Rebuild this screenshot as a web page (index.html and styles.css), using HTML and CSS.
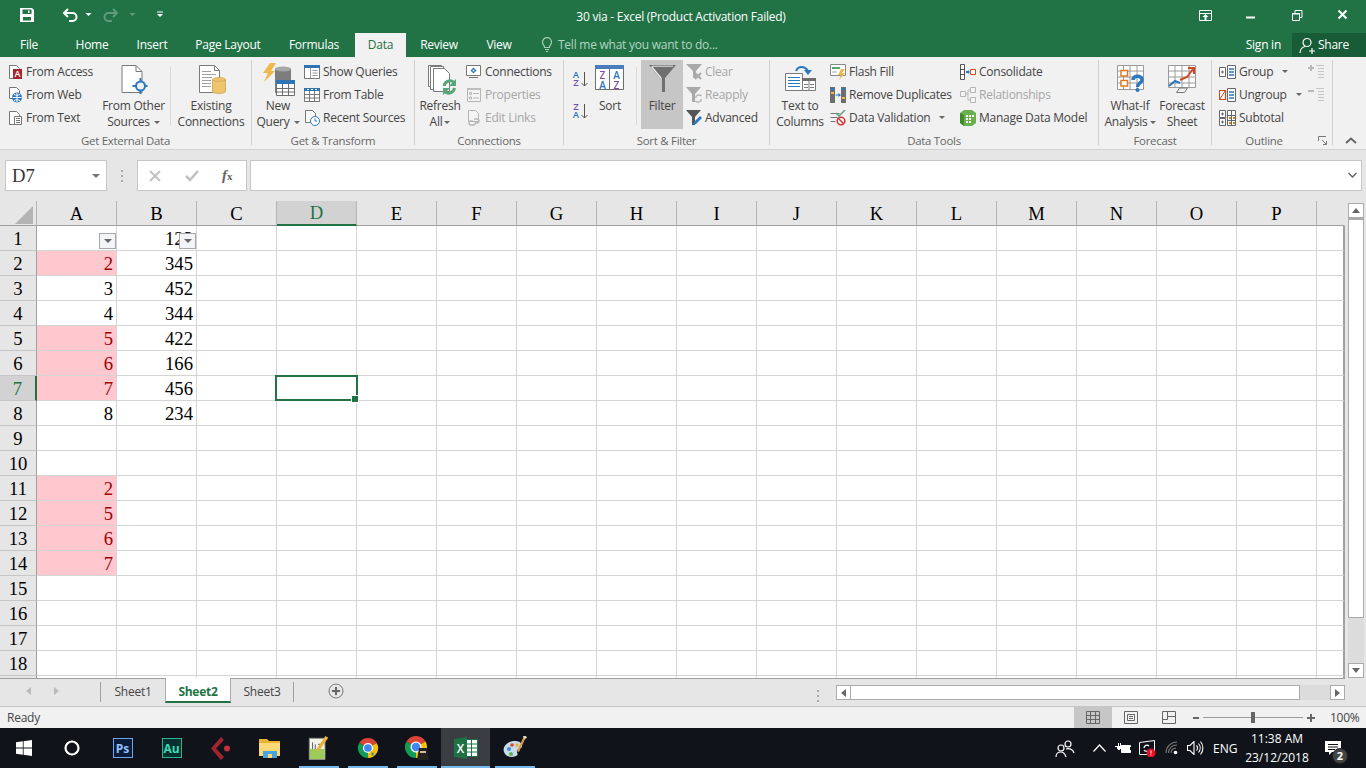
FILE: index.html
```html
<!DOCTYPE html>
<html lang="en">
<head>
<meta charset="utf-8">
<title>30 via - Excel (Product Activation Failed)</title>
<link rel="stylesheet" href="styles.css">
</head>
<body>
<header class="titlebar">
  <svg class="qat" width="175" height="33" viewBox="0 0 175 33">
    <path fill="#fff" d="M20 8h12l2 2v12H20z"/>
    <path fill="#217346" d="M22.500 9.500h9v4.500h-9zM23 17h8v3.500h-8z"/><path fill="#fff" d="M28 10.500h1.500v2.500H28z"/>
    <path fill="none" stroke="#fff" stroke-width="2" d="M68 9l-4 4 4 4M64 13h8.500a3.700 3.700 0 0 1 0 8H69"/>
    <path fill="#fff" d="M85.500 13h6l-3 3z"/>
    <path fill="none" stroke="#5f9c7b" stroke-width="2" d="M113 9l4 4-4 4M117 13h-8.500a3.700 3.700 0 0 0 0 8H112"/>
    <path fill="#5f9c7b" d="M129.500 13h6l-3 3z"/>
    <path fill="#fff" d="M157 11.500h6v1h-6zM157 14h6l-3 3z"/>
  </svg>
  <div class="doc-title">30 via - Excel (Product Activation Failed)</div>
  <svg class="winctl" width="191" height="33" viewBox="0 0 191 33">
    <path fill="none" stroke="#fff" d="M24.500 10.500h12v10h-12zM24.500 13.500h12"/><path fill="#fff" d="M30.500 14l3 3h-2v3h-2v-3h-2z"/>
    <path fill="#fff" d="M71 16.500h9v2h-9z"/>
    <path fill="none" stroke="#fff" d="M117.500 13.500h7v7h-7zM120 13v-2.500h7v7h-2.500"/><path fill="#fff" d="M117 13h8v1.500h-8z"/>
    <path fill="none" stroke="#fff" stroke-width="2" d="M163.500 10.500l8 8M171.500 10.500l-8 8"/>
  </svg>
</header>

<nav class="tabstrip">
  <span class="tab tab-file">File</span>
  <span class="tab tab-home">Home</span>
  <span class="tab tab-insert">Insert</span>
  <span class="tab tab-layout">Page Layout</span>
  <span class="tab tab-formulas">Formulas</span>
  <span class="tab tab-data">Data</span>
  <span class="tab tab-review">Review</span>
  <span class="tab tab-view">View</span>
  <span class="tellme">
    <svg width="14" height="16" viewBox="0 0 14 16"><path fill="none" stroke="#a9cdb8" stroke-width="1.200" d="M4.600 10.500c0-2-2.100-2.800-2.100-5.300a4.500 4.500 0 0 1 9 0c0 2.500-2.100 3.300-2.100 5.300zM5 12.500h4M5.800 14.500h2.400"/></svg>
    Tell me what you want to do...
  </span>
  <span class="signin">Sign in</span>
  <span class="share">
    <svg width="17" height="17" viewBox="0 0 17 17"><circle cx="8" cy="5.500" r="4" fill="none" stroke="#fff" stroke-width="1.200"/><path fill="none" stroke="#fff" stroke-width="1.200" d="M1 16c0-3.500 2.500-6 5-6.500M10 14h6M13 11v6"/></svg>
    Share
  </span>
</nav>

<section class="ribbon">
  <div class="group g1">
    <div class="group-body">
      <div class="stack s-ext">
        <div class="item tight">
          <svg width="16" height="16" viewBox="0 0 16 16"><path fill="#fff" stroke="#777" d="M1.500 1.500h7l3 3v10h-10z"/><rect x="5" y="5" width="9" height="10" fill="#a4262c"/><text x="9.500" y="13" class="svgt" fill="#fff" font-size="9" text-anchor="middle">A</text></svg>
          From Access
        </div>
        <div class="item tight">
          <svg width="16" height="16" viewBox="0 0 16 16"><path fill="#fff" stroke="#777" d="M1.500.5h7l3 3v8h-10z"/><circle cx="9" cy="10.500" r="5" fill="#2b78c2"/><path fill="none" stroke="#fff" d="M4.500 10.500h9M9 6v9M6 7.500c2 1 4 1 6 0M6 13.500c2-1 4-1 6 0"/></svg>
          From Web
        </div>
        <div class="item tight">
          <svg width="16" height="16" viewBox="0 0 16 16"><path fill="#fff" stroke="#777" d="M1.500 1.500h7l3 3v10h-10z"/><path fill="#fff" stroke="#777" d="M6.500 6.500h7v8h-7z"/><path stroke="#777" d="M8 8.500h4M8 10.500h4M8 12.500h4"/></svg>
          From Text
        </div>
      </div>
      <div class="large w-other">
        <div class="large-icon">
          <svg width="28" height="30" viewBox="-1.500 0 28 30"><path fill="#fff" stroke="#7a7a7a" d="M.5.500h14l6 6v21H.5z"/><path fill="none" stroke="#7a7a7a" d="M14.500.5v6h6"/><circle cx="19" cy="21" r="4.500" fill="#f1f1f1" stroke="#2b78c2" stroke-width="2"/><path stroke="#2b78c2" stroke-width="2" d="M11 21h4M23 21h3M19 13v4M19 25v4"/></svg>
        </div>
        <span>From Other</span>
        <span>Sources<i class="caret"></i></span>
      </div>
      <div class="inner-sep"></div>
      <div class="large w-existing">
        <div class="large-icon">
          <svg width="30" height="30" viewBox="-3 0 30 30"><path fill="#fff" stroke="#7a7a7a" d="M.5.500h15l5 5v22H.5z"/><path fill="none" stroke="#7a7a7a" d="M15.500.5v5h5"/><path stroke="#a0a0a0" d="M3 6.500h9M3 9.500h14M3 12.500h10M3 15.500h9M3 18.500h9M3 21.500h9"/><path fill="#f0c36d" stroke="#d3ad5c" d="M13.500 14.500c0-2.500 13-2.500 13 0v12c0 2.500-13 2.500-13 0z"/><path fill="none" stroke="#d3ad5c" d="M13.500 14.500c0 2.500 13 2.500 13 0"/></svg>
        </div>
        <span>Existing</span>
        <span>Connections</span>
      </div>
    </div>
    <div class="group-label">Get External Data</div>
  </div>

  <div class="group g2">
    <div class="group-body">
      <div class="large w-query">
        <div class="large-icon up2">
          <svg width="33" height="33" viewBox="0 0 33 33"><path fill="#f0b84a" d="M8 0h6l-5 8h4L2 19l4-9H1z"/><path fill="#7d7d7d" d="M13 6c0-2 16-2 16 0v24H13z"/><ellipse cx="21" cy="6" rx="8" ry="2.500" fill="#a8a8a8"/><path fill="#fff" stroke="#6d6d6d" d="M14.500 17.500h18v15h-18z"/><path fill="#2f75b5" d="M14 17h19v4H14z"/><path stroke="#6d6d6d" d="M14.500 25.500h18M14.500 29h18M20.500 21v12M26.500 21v12"/></svg>
        </div>
        <span>New</span>
        <span>Query<i class="caret"></i></span>
      </div>
      <div class="stack s-query">
        <div class="item">
          <svg width="16" height="16" viewBox="0 0 16 16"><path fill="#fff" stroke="#777" d="M.5 1.500h15v13H.5z"/><path fill="#2f75b5" d="M0 1h16v3H0z"/><path stroke="#999" d="M8.500 6.500h5M8.500 9h5M8.500 11.500h5M6.500 4v10"/></svg>
          Show Queries
        </div>
        <div class="item">
          <svg width="16" height="16" viewBox="0 0 16 16"><path fill="#fff" stroke="#777" d="M.5 1.500h15v13H.5z"/><path fill="#2f75b5" d="M0 1h16v3H0z"/><path stroke="#fff" d="M3 2.500h2M7 2.500h2M11 2.500h2"/><path stroke="#777" d="M.5 7.500h15M.5 11h15M5.500 4v11M10.500 4v11"/></svg>
          From Table
        </div>
        <div class="item">
          <svg width="16" height="16" viewBox="0 0 16 16"><path fill="#fff" stroke="#777" d="M1.500.5h7l3 3v9h-10z"/><circle cx="11" cy="11" r="4.500" fill="#fff" stroke="#2b78c2"/><path fill="none" stroke="#2b78c2" d="M11 8.500V11h2"/></svg>
          Recent Sources
        </div>
      </div>
    </div>
    <div class="group-label">Get &amp; Transform</div>
  </div>

  <div class="group g3">
    <div class="group-body">
      <div class="large w-refresh">
        <div class="large-icon">
          <svg width="33" height="31" viewBox="-3 0 33 31"><path fill="#fff" stroke="#7a7a7a" d="M1.500.5h13v21h-13z"/><path fill="#fff" stroke="#7a7a7a" d="M3.500 1.500h13v23h-13z"/><path fill="#fff" stroke="#7a7a7a" d="M6.500 3.500h11l5 5v18h-16z"/><path fill="none" stroke="#59a679" stroke-width="3" d="M17 21a6 6 0 0 1 10-3.500M27.500 23a6 6 0 0 1-10 3.500"/><path fill="#59a679" d="M29 14v7h-7zM16 30v-7h7z"/></svg>
        </div>
        <span>Refresh</span>
        <span>All<i class="caret small"></i></span>
      </div>
      <div class="stack s-conn">
        <div class="item">
          <svg width="16" height="16" viewBox="0 0 16 16"><path fill="#fff" stroke="#777" d="M.5 1.500h14v10H.5z"/><path fill="#2b78c2" d="M7.500 3.500l3 3-3 3-3-3z"/><circle cx="7.500" cy="6.500" r="1" fill="#fff"/><path stroke="#777" d="M3 13.500h9"/></svg>
          Connections
        </div>
        <div class="item off">
          <svg width="16" height="16" viewBox="0 0 16 16"><path fill="#f4f4f4" stroke="#b5b5b5" d="M1.500 1.500h13v13h-13z"/><path fill="#bdbdbd" d="M1 1h14v2H1z"/><path fill="none" stroke="#b5b5b5" d="M3.500 5.500h2v2h-2zM3.500 10h2v2h-2zM7 6.500h6M7 11h6"/></svg>
          Properties
        </div>
        <div class="item off">
          <svg width="16" height="16" viewBox="0 0 16 16"><path fill="#f4f4f4" stroke="#b5b5b5" d="M2.500.5h7l3 3v8h-10z"/><path fill="none" stroke="#b5b5b5" stroke-width="1.300" d="M7 11H5a2 2 0 0 0 0 4h3a2 2 0 0 0 1-3M9 13h2a2 2 0 0 0 0-4H8"/></svg>
          Edit Links
        </div>
      </div>
    </div>
    <div class="group-label">Connections</div>
  </div>

  <div class="group g4">
    <div class="group-body">
      <div class="sortcol">
        <svg width="17" height="24" viewBox="0 -3 17 24"><text x="5" y="8" class="svgt" fill="#2b78c2" font-size="9.500" text-anchor="middle">A</text><text x="5" y="16" class="svgt" fill="#7c4ea8" font-size="9.500" text-anchor="middle">Z</text><path fill="none" stroke="#555" d="M13.500 2v14M10.500 13l3 3 3-3"/></svg>
        <svg width="17" height="24" viewBox="0 -3 17 24"><text x="5" y="8" class="svgt" fill="#7c4ea8" font-size="9.500" text-anchor="middle">Z</text><text x="5" y="16" class="svgt" fill="#2b78c2" font-size="9.500" text-anchor="middle">A</text><path fill="none" stroke="#555" d="M13.500 2v14M10.500 13l3 3 3-3"/></svg>
      </div>
      <div class="large w-sort">
        <div class="large-icon">
          <svg width="30" height="26" viewBox="0 0 30 26"><path fill="#fff" stroke="#6d6d6d" d="M.5.500h28v24H.5zM14.500 4v21"/><path fill="#4a7ebb" d="M0 0h29v4H0z"/><text x="7.500" y="14" class="svgt" fill="#7c4ea8" font-size="10" text-anchor="middle">Z</text><text x="7.500" y="23.500" class="svgt" fill="#2b78c2" font-size="10" text-anchor="middle">A</text><text x="21.500" y="14" class="svgt" fill="#2b78c2" font-size="10" text-anchor="middle">A</text><text x="21.500" y="23.500" class="svgt" fill="#7c4ea8" font-size="10" text-anchor="middle">Z</text></svg>
        </div>
        <span>Sort</span>
      </div>
      <div class="inner-sep sep-filter"></div>
      <div class="large w-filter">
        <div class="large-icon">
          <svg width="27" height="27" viewBox="0 0 27 27"><path fill="#6f6f6f" d="M0 0h27L16 13v14h-5V13z"/><path fill="none" stroke="#e8e8e8" stroke-width="1.400" d="M2.500 1.500L12 13v14"/><path stroke="#e8e8e8" d="M3 1.200h21"/></svg>
        </div>
        <span>Filter</span>
      </div>
      <div class="stack s-filter">
        <div class="item off">
          <svg width="16" height="16" viewBox="0 0 16 16"><path fill="#a9a9a9" d="M0 0h16L10 7v7H7V7z"/><path stroke="#a9a9a9" stroke-width="2" d="M9 9l6 6M15 9l-6 6"/></svg>
          Clear
        </div>
        <div class="item off">
          <svg width="16" height="16" viewBox="0 0 16 16"><path fill="#a9a9a9" d="M0 0h15L9 7v8H6V7z"/><path fill="none" stroke="#b5b5b5" stroke-width="1.500" d="M9.500 11a3.500 3.500 0 0 1 6-2M15.500 12a3.500 3.500 0 0 1-6 2"/></svg>
          Reapply
        </div>
        <div class="item">
          <svg width="16" height="16" viewBox="0 0 16 16"><path fill="#555" d="M0 0h15L9 7v8H6V7z"/><path fill="#2b78c2" d="M14 6l2 2-6 6-3 1 1-3z"/></svg>
          Advanced
        </div>
      </div>
    </div>
    <div class="group-label">Sort &amp; Filter</div>
  </div>

  <div class="group g5">
    <div class="group-body">
      <div class="large w-ttc">
        <div class="large-icon">
          <svg width="32" height="26" viewBox="0 0 32 26"><path fill="#fff" stroke="#7a7a7a" d="M1.500 8.500h17v17h-17z"/><path stroke="#2b78c2" d="M4 12.500h12M4 15.500h12M4 18.500h12M4 21.500h12"/><path fill="none" stroke="#2b78c2" stroke-width="2" d="M12 6c2-5.500 9-5.500 12 0"/><path fill="#2b78c2" d="M20 5h8l-4 5z"/><path fill="#fff" stroke="#7a7a7a" d="M18.500 13.500h13v12h-13z"/><path fill="#6d6d6d" d="M18 13h14v3H18z"/><path stroke="#7a7a7a" d="M25 16v10M20 19.500h4M26 19.500h4M20 22.500h4M26 22.500h4"/></svg>
        </div>
        <span>Text to</span>
        <span>Columns</span>
      </div>
      <div class="stack s-tools1">
        <div class="item">
          <svg width="16" height="16" viewBox="0 0 16 16"><path fill="#fff" stroke="#888" d="M.5.500h15v11H.5z"/><path fill="#59a679" d="M2 3h8v2H2z"/><path stroke="#aaa" d="M2 8h5"/><path fill="#f0b84a" d="M11 5h4l-3 4h3l-6 7 2-5H8z"/></svg>
          Flash Fill
        </div>
        <div class="item">
          <svg width="16" height="16" viewBox="0 0 16 16"><path fill="#6d6d6d" d="M0 0h5v16H0zM11 0h5v16h-5z"/><path fill="#f0b84a" d="M1 5h3v2H1zM12 10h3v2h-3z"/><path fill="#2b78c2" d="M1 1h3v2H1zM12 1h3v2h-3zM5.500 7.500h3V6l2.500 2-2.500 2V8.500h-3z"/></svg>
          Remove Duplicates
        </div>
        <div class="item">
          <svg width="16" height="16" viewBox="0 0 16 16"><path fill="none" stroke="#777" d="M.5 3.500h9M.5 7.500h7M.5 11.500h5"/><path fill="none" stroke="#59a679" stroke-width="1.500" d="M6 3l3 3 6-6"/><circle cx="11" cy="11" r="3.800" fill="#fff" stroke="#d13438" stroke-width="1.500"/><path stroke="#d13438" stroke-width="1.500" d="M8.500 8.500l5 5"/></svg>
          Data Validation<i class="caret wide"></i>
        </div>
      </div>
      <div class="stack s-tools2">
        <div class="item">
          <svg width="16" height="16" viewBox="0 0 16 16"><path fill="#fff" stroke="#555" d="M.5.500h4v15h-4z"/><path stroke="#555" d="M.5 5.500h4M.5 10.500h4"/><path fill="#2b78c2" d="M6 7h2V6l2 2-2 2V9H6z"/><path fill="#fff" stroke="#d1481f" d="M10.500 5.500h5v5h-5z"/></svg>
          Consolidate
        </div>
        <div class="item off">
          <svg width="16" height="16" viewBox="0 0 16 16"><path fill="#f4f4f4" stroke="#b5b5b5" d="M.5 4.500h5v5h-5zM10.500.5h5v5h-5zM10.500 10.500h5v5h-5zM5.500 7h2.500V3h2.500M8 7v6h2.500"/></svg>
          Relationships
        </div>
        <div class="item">
          <svg width="16" height="16" viewBox="0 0 16 16"><path fill="#6ab04c" d="M4 0h8l4 3v10l-4 3H4l-4-3V3z"/><path fill="#3f8a2c" d="M0 3l4 2v11l-4-3z"/><path fill="#fff" d="M6 5h2v2H6zM9 5h2v2H9zM12 5h2v2h-2zM6 8h2v2H6zM9 8h2v2H9zM6 11h2v2H6zM9 11h2v2H9z"/></svg>
          Manage Data Model
        </div>
      </div>
    </div>
    <div class="group-label">Data Tools</div>
  </div>

  <div class="group g6">
    <div class="group-body">
      <div class="large w-whatif">
        <div class="large-icon">
          <svg width="32" height="27" viewBox="0 0 32 27"><path fill="#fff" stroke="#9a9a9a" d="M3.500.5h26v24h-26zM9.500.5v24M16 .5v24M23 .5v24M3.500 6h26M3.500 12h26M3.500 18h26"/><path fill="#fff" stroke="#e07b25" stroke-width="1.500" d="M7 5.500h6.500V11H7zM7 15.500h6.500V21H7z"/><path fill="none" stroke="#2b78c2" stroke-width="3.500" d="M19 15c0-5 9-5 9 0 0 3-4.500 3-4.500 7"/><circle cx="23.500" cy="25" r="2" fill="#2b78c2"/></svg>
        </div>
        <span>What-If</span>
        <span>Analysis<i class="caret small"></i></span>
      </div>
      <div class="large w-forecast">
        <div class="large-icon">
          <svg width="30" height="28" viewBox="0 0 30 28"><path fill="#fff" stroke="#9a9a9a" d="M1.500.5h27v22h-27zM8 .5v22M15 .5v22M22 .5v22M1.500 6h27M1.500 12h27M1.500 18h27"/><path fill="none" stroke="#d1481f" stroke-width="2" d="M13 15l7-3 6-8M21 3h6v6"/><path fill="none" stroke="#2b78c2" stroke-width="2" d="M2 21l6-5 5 2"/><path fill="none" stroke="#777" d="M9.500 27.500h8l3-4.500h-8z"/></svg>
        </div>
        <span>Forecast</span>
        <span>Sheet</span>
      </div>
    </div>
    <div class="group-label">Forecast</div>
  </div>

  <div class="group g7">
    <div class="group-body">
      <div class="stack s-outline">
        <div class="item">
          <svg width="17" height="16" viewBox="0 0 17 16"><path fill="#fff" stroke="#666" d="M.5 3.500h6v9h-6z"/><path stroke="#666" d="M2 8h3M3.500 6.500v3"/><path fill="#fff" stroke="#666" d="M8.500 1.500h8v13h-8z"/><path stroke="#2b78c2" stroke-width="1.500" d="M10 5h5M10 8h5M10 11h5"/></svg>
          Group<i class="caret wide"></i>
        </div>
        <div class="item">
          <svg width="17" height="16" viewBox="0 0 17 16"><path fill="#fff" stroke="#d1481f" stroke-width="1.200" d="M.5 3.500h6v9h-6z"/><path stroke="#d1481f" d="M1 12l5-8"/><path fill="#fff" stroke="#666" d="M8.500 1.500h8v13h-8z"/><path stroke="#2b78c2" stroke-width="1.500" d="M10 5h5M10 8h5M10 11h5"/></svg>
          Ungroup<i class="caret wide"></i>
        </div>
        <div class="item">
          <svg width="17" height="16" viewBox="0 0 17 16"><path fill="#fff" stroke="#666" d="M.5.500h6v7h-6zM.5 8.500h6v7h-6zM8.500.5h8v15h-8zM12.500.5v15M8.500 5.500h8M8.500 10.500h8"/><path stroke="#666" d="M2 4h3M3.500 2.500v3M2 12h3M3.500 10.500v3"/><path fill="#e07b25" d="M10 7h2v2h-2zM14 7h2v2h-2zM10 12h2v2h-2zM14 12h2v2h-2z"/></svg>
          Subtotal
        </div>
      </div>
      <div class="outline-side">
        <svg width="16" height="16" viewBox="0 0 16 16"><path stroke="#b8b8b8" stroke-width="2" d="M0 4h6M3 1v6"/><path stroke="#c4c4c4" d="M8 1.500h8M10 4.500h6M10 7.500h6M10 10.500h6M10 13.500h6"/></svg>
        <svg width="16" height="16" viewBox="0 0 16 16"><path stroke="#b8b8b8" stroke-width="2" d="M0 4h6"/><path stroke="#c4c4c4" d="M8 1.500h8M10 4.500h6M10 7.500h6M10 10.500h6M10 13.500h6"/></svg>
      </div>
    </div>
    <div class="group-label">Outline</div>
    <svg class="launcher" width="9" height="9" viewBox="0 0 9 9"><path fill="none" stroke="#777" d="M.5 5V.5H8M4 4l4 4M8.500 5v3.500H5"/></svg>
  </div>
  <svg class="collapse" width="12" height="7" viewBox="0 0 12 7"><path fill="none" stroke="#666" stroke-width="2" d="M1 6l5-4.500L11 6"/></svg>
</section>

<section class="formula-row">
  <div class="namebox"><span>D7</span><i class="caret dark"></i></div>
  <svg class="grip" width="3" height="12" viewBox="0 0 3 12"><path fill="#a8a8a8" d="M0 0h2v2H0zM0 5h2v2H0zM0 10h2v2H0z"/></svg>
  <div class="fxbox">
    <svg width="14" height="14" viewBox="0 0 14 14"><path stroke="#c0c0c0" stroke-width="1.800" d="M2 2l10 10M12 2L2 12"/></svg>
    <svg width="16" height="14" viewBox="0 0 16 14"><path fill="none" stroke="#c0c0c0" stroke-width="2.500" d="M2 7l4 4 8-9"/></svg>
    <span class="fx"><em>f</em><small>x</small></span>
  </div>
  <div class="formula-input"></div>
  <svg class="formula-caret" width="9" height="6" viewBox="0 0 9 6"><path fill="none" stroke="#666" stroke-width="1.500" d="M.5 1l4 4 4-4"/></svg>
</section>

<section class="workarea">
  <div class="sheet">
    <table class="grid">
      <colgroup><col class="c-head"><col span="16" class="c-col"><col class="c-last"></colgroup>
      <thead>
        <tr><th class="corner"><svg width="18" height="18" viewBox="0 0 18 18"><path fill="#b4b4b4" d="M18 0v18H0z"/></svg></th><th>A</th><th>B</th><th>C</th><th class="sel">D</th><th>E</th><th>F</th><th>G</th><th>H</th><th>I</th><th>J</th><th>K</th><th>L</th><th>M</th><th>N</th><th>O</th><th>P</th><th></th></tr>
      </thead>
      <tbody>
        <tr><th>1</th><td><i class="fbtn"></i></td><td>123<i class="fbtn"></i></td><td></td><td></td><td></td><td></td><td></td><td></td><td></td><td></td><td></td><td></td><td></td><td></td><td></td><td></td><td></td></tr>
        <tr><th>2</th><td class="bad">2</td><td>345</td><td></td><td></td><td></td><td></td><td></td><td></td><td></td><td></td><td></td><td></td><td></td><td></td><td></td><td></td><td></td></tr>
        <tr><th>3</th><td>3</td><td>452</td><td></td><td></td><td></td><td></td><td></td><td></td><td></td><td></td><td></td><td></td><td></td><td></td><td></td><td></td><td></td></tr>
        <tr><th>4</th><td>4</td><td>344</td><td></td><td></td><td></td><td></td><td></td><td></td><td></td><td></td><td></td><td></td><td></td><td></td><td></td><td></td><td></td></tr>
        <tr><th>5</th><td class="bad">5</td><td>422</td><td></td><td></td><td></td><td></td><td></td><td></td><td></td><td></td><td></td><td></td><td></td><td></td><td></td><td></td><td></td></tr>
        <tr><th>6</th><td class="bad">6</td><td>166</td><td></td><td></td><td></td><td></td><td></td><td></td><td></td><td></td><td></td><td></td><td></td><td></td><td></td><td></td><td></td></tr>
        <tr><th class="sel-row">7</th><td class="bad">7</td><td>456</td><td></td><td class="active"><div class="selection"></div></td><td></td><td></td><td></td><td></td><td></td><td></td><td></td><td></td><td></td><td></td><td></td><td></td><td></td></tr>
        <tr><th>8</th><td>8</td><td>234</td><td></td><td></td><td></td><td></td><td></td><td></td><td></td><td></td><td></td><td></td><td></td><td></td><td></td><td></td><td></td></tr>
        <tr><th>9</th><td></td><td></td><td></td><td></td><td></td><td></td><td></td><td></td><td></td><td></td><td></td><td></td><td></td><td></td><td></td><td></td><td></td></tr>
        <tr><th>10</th><td></td><td></td><td></td><td></td><td></td><td></td><td></td><td></td><td></td><td></td><td></td><td></td><td></td><td></td><td></td><td></td><td></td></tr>
        <tr><th>11</th><td class="bad">2</td><td></td><td></td><td></td><td></td><td></td><td></td><td></td><td></td><td></td><td></td><td></td><td></td><td></td><td></td><td></td><td></td></tr>
        <tr><th>12</th><td class="bad">5</td><td></td><td></td><td></td><td></td><td></td><td></td><td></td><td></td><td></td><td></td><td></td><td></td><td></td><td></td><td></td><td></td></tr>
        <tr><th>13</th><td class="bad">6</td><td></td><td></td><td></td><td></td><td></td><td></td><td></td><td></td><td></td><td></td><td></td><td></td><td></td><td></td><td></td><td></td></tr>
        <tr><th>14</th><td class="bad">7</td><td></td><td></td><td></td><td></td><td></td><td></td><td></td><td></td><td></td><td></td><td></td><td></td><td></td><td></td><td></td><td></td></tr>
        <tr><th>15</th><td></td><td></td><td></td><td></td><td></td><td></td><td></td><td></td><td></td><td></td><td></td><td></td><td></td><td></td><td></td><td></td><td></td></tr>
        <tr><th>16</th><td></td><td></td><td></td><td></td><td></td><td></td><td></td><td></td><td></td><td></td><td></td><td></td><td></td><td></td><td></td><td></td><td></td></tr>
        <tr><th>17</th><td></td><td></td><td></td><td></td><td></td><td></td><td></td><td></td><td></td><td></td><td></td><td></td><td></td><td></td><td></td><td></td><td></td></tr>
        <tr><th>18</th><td></td><td></td><td></td><td></td><td></td><td></td><td></td><td></td><td></td><td></td><td></td><td></td><td></td><td></td><td></td><td></td><td></td></tr>
        <tr><th></th><td></td><td></td><td></td><td></td><td></td><td></td><td></td><td></td><td></td><td></td><td></td><td></td><td></td><td></td><td></td><td></td><td></td></tr>
      </tbody>
    </table>
  </div>
  <div class="vscroll">
    <div class="sb-btn"><i class="tri up"></i></div>
    <div class="v-thumb"></div>
    <div class="v-track"></div>
    <div class="sb-btn"><i class="tri down"></i></div>
  </div>
</section>

<section class="sheetbar">
  <div class="sheet-nav"><i class="tri left"></i><i class="tri right"></i></div>
  <div class="sheet-tab">Sheet1</div>
  <div class="sheet-tab current">Sheet2</div>
  <div class="sheet-tab">Sheet3</div>
  <svg class="addsheet" width="16" height="16" viewBox="0 0 16 16"><circle cx="8" cy="8" r="7" fill="none" stroke="#777"/><path stroke="#666" stroke-width="2" d="M4 8h8M8 4v8"/></svg>
  <svg class="grip hgrip" width="3" height="12" viewBox="0 0 3 12"><path fill="#a8a8a8" d="M0 0h2v2H0zM0 5h2v2H0zM0 10h2v2H0z"/></svg>
  <div class="hscroll">
    <div class="sb-btn"><i class="tri left dark"></i></div>
    <div class="h-thumb"></div>
    <div class="h-track"></div>
    <div class="sb-btn"><i class="tri right dark"></i></div>
  </div>
</section>

<footer class="statusbar">
  <span class="ready">Ready</span>
  <div class="viewbtn on"><svg width="14" height="13" viewBox="0 0 14 13"><path fill="none" stroke="#666" d="M.5.500h13v12H.5zM.5 4.500h13M.5 8.500h13M4.500.5v12M9.500.5v12"/></svg></div>
  <div class="viewbtn"><svg width="14" height="13" viewBox="0 0 14 13"><path fill="none" stroke="#666" d="M.5.500h13v12H.5z"/><path fill="none" stroke="#666" d="M3.500 3.500h7v6h-7zM5 5.500h4M5 7.500h4"/></svg></div>
  <div class="viewbtn"><svg width="14" height="13" viewBox="0 0 14 13"><path fill="none" stroke="#666" d="M.5.500h13v12H.5zM5.500.5v8H.5M5.500 5.500h8"/></svg></div>
  <div class="zoom">
    <svg width="8" height="8" viewBox="0 0 8 8"><path stroke="#666" stroke-width="2" d="M1 4h6"/></svg>
    <div class="slider"><i class="knob"></i></div>
    <svg class="plus" width="8" height="8" viewBox="0 0 8 8"><path stroke="#666" stroke-width="2" d="M0 4h8M4 0v8"/></svg>
  </div>
  <span class="pct">100%</span>
</footer>

<footer class="taskbar">
  <div class="task t-first"><svg width="16" height="16" viewBox="0 0 16 16"><path fill="#fff" d="M0 2.300l6.800-1v6.300H0zM7.600 1.200L16 0v7.600H7.600zM0 8.400h6.800v6.300l-6.800-1zM7.600 8.400H16V16l-8.400-1.200z"/></svg></div>
  <div class="task t-first"><svg width="16" height="16" viewBox="0 0 16 16"><circle cx="8" cy="8" r="6.500" fill="none" stroke="#fff" stroke-width="2.200"/></svg></div>
  <div class="task"><span class="app ps">Ps</span></div>
  <div class="task"><span class="app au">Au</span></div>
  <div class="task"><svg width="20" height="23" viewBox="0 0 20 23"><path fill="#a3242f" d="M10 0l3 3-8 8.500 8 8.500-3 3L0 11.500z"/><circle cx="16" cy="11.500" r="3" fill="#c32f3c"/></svg></div>
  <div class="task"><svg width="22" height="20" viewBox="0 0 22 20"><path fill="#e8b431" d="M0 1h8l2 2h11v15H0z"/><path fill="#fbd976" d="M0 5h21v13H0z"/><path fill="#4aa3df" d="M4 13h14v7H4z"/><path fill="#fbd976" d="M9 16h4v4H9z"/></svg></div>
  <div class="task run"><svg width="22" height="24" viewBox="0 0 22 26"><path fill="#f3f3ea" stroke="#888" d="M.5 2.500h17v23H.5z"/><path fill="#9ccb5a" d="M1 14h16v11H1z"/><path stroke="#555" d="M4 7v7M7 9v5M10 9h4"/><path fill="#e6b33a" d="M18 0l3 2-9 13-4 2 1-4z"/></svg></div>
  <div class="task run"><svg width="22" height="22" viewBox="0 0 24 24"><path fill="#db4437" d="M12 12L2.470 6.500A11 11 0 0 1 21.530 6.500z"/><path fill="#f4c20d" d="M12 12l9.530-5.500A11 11 0 0 1 12 23z"/><path fill="#0f9d58" d="M12 12v11A11 11 0 0 1 2.470 6.500z"/><circle cx="12" cy="12" r="5.500" fill="#fff"/><circle cx="12" cy="12" r="4.200" fill="#4285f4"/><path fill="#f4c20d" d="M15 15l3 1-1 5-2-1-2 3-1-2z"/><path fill="#2b78c2" d="M16 17h2v3h-2z"/></svg></div>
  <div class="task run"><svg width="24" height="24" viewBox="0 0 24 24"><path fill="#db4437" d="M11 11L1.470 5.500A11 11 0 0 1 20.530 5.500z"/><path fill="#f4c20d" d="M11 11l9.530-5.500A11 11 0 0 1 11 22z"/><path fill="#0f9d58" d="M11 11v11A11 11 0 0 1 1.470 5.500z"/><circle cx="11" cy="11" r="5.500" fill="#fff"/><circle cx="11" cy="11" r="4.200" fill="#4285f4"/><path fill="#222" d="M14 12h8l2 12H12z"/><path fill="#d7b899" d="M15 15h6v2h-6z"/></svg></div>
  <div class="task run current"><svg width="24" height="22" viewBox="0 0 24 22"><path fill="#fff" stroke="#1e7145" d="M11.500 2.500h12v17h-12z"/><path stroke="#1e7145" d="M12 7h11M12 11h11M12 15h11M17.500 3v16"/><path fill="#1e7145" d="M0 2l13-2v22L0 20z"/><text x="6.500" y="15.500" class="svgt" fill="#fff" font-size="12" text-anchor="middle">X</text></svg></div>
  <div class="task run"><svg width="24" height="24" viewBox="0 0 24 24"><path fill="#c7dcee" d="M1 16c-2-6 4-11 11-11 5 0 8 3 7 6-1 2-5 1-5 4 0 3 2 4-1 5-5 2-10 1-12-4z"/><circle cx="6" cy="13" r="2" fill="#3d8fd1"/><circle cx="9" cy="9" r="1.800" fill="#e0452f"/><circle cx="14" cy="9" r="1.800" fill="#e8b431"/><circle cx="8" cy="18" r="2" fill="#5fb04d"/><path fill="#d99b4a" d="M21 0l2 1-7 15-2-1z"/><path fill="#e0d6c6" d="M20 0h3l1 2-3 1z"/></svg></div>
  <div class="tray">
    <svg class="people" width="20" height="20" viewBox="0 0 20 20"><circle cx="13" cy="6" r="3" fill="none" stroke="#fff" stroke-width="1.200"/><circle cx="6" cy="10" r="3" fill="none" stroke="#fff" stroke-width="1.200"/><path fill="none" stroke="#fff" stroke-width="1.200" d="M1 19c0-3 2-5 5-5s4 2 5 5M11 11c3-1 7 0 8 4"/></svg>
    <svg class="chevron" width="13" height="8" viewBox="0 0 13 8"><path fill="none" stroke="#fff" stroke-width="1.200" d="M.5 7.500l6-6.500 6 6.500"/></svg>
    <svg class="battery" width="17" height="11" viewBox="0 0 17 11"><path fill="#fff" d="M0 3h3V0h1v3h1V0h1v3h1v1H6v2H5v1H3V6H2V4H0z"/><path fill="#fff" stroke="#fff" d="M6.500 2.500h9v7h-9z"/><path fill="#111" d="M15 4h2v3h-2z"/></svg>
    <svg class="action" width="17" height="17" viewBox="0 0 17 17"><path fill="none" stroke="#fff" d="M.5 2.500l15-2v14h-15z"/><path fill="none" stroke="#fff" stroke-width="1.300" d="M5 8a3 3 0 0 1 5-2M10 10a3 3 0 0 1-5 0"/><circle cx="12" cy="13" r="4.500" fill="#e81123"/><path stroke="#fff" d="M12 10.500v3M12 14.500v1"/></svg>
    <svg class="wifi" width="14" height="14" viewBox="0 0 14 14"><path fill="none" stroke="#777" stroke-width="1.100" d="M1 12a11 11 0 0 1 11-11M3.500 12A8 8 0 0 1 12 4M6 12a5.500 5.500 0 0 1 5-5"/><circle cx="10.500" cy="11.500" r="1.800" fill="#fff"/></svg>
    <svg class="volume" width="17" height="14" viewBox="0 0 17 14"><path fill="none" stroke="#fff" stroke-width="1.100" d="M.5 4.500h2.500l4-4v13l-4-4H.5zM9.500 4.500a3.500 3.500 0 0 1 0 5M11.500 2.500a7 7 0 0 1 0 9M13.500.5a10 10 0 0 1 0 13"/></svg>
    <span class="lang">ENG</span>
    <div class="clock"><span>11:38 AM</span><span>23/12/2018</span></div>
    <div class="notify">
      <svg width="16" height="15" viewBox="0 0 16 15"><path fill="#fff" d="M0 0h16v11H7l-3 3v-3H0z"/><path stroke="#111" d="M3 3.500h10M3 6h10M3 8.500h7"/></svg>
      <span class="badge">2</span>
    </div>
  </div>
</footer>
</body>
</html>
```

FILE: styles.css
```css
* { box-sizing: border-box; }
html, body { margin: 0; padding: 0; }
body {
  width: 1366px;
  height: 768px;
  overflow: hidden;
  font-family: "Open Sans", "Liberation Sans", sans-serif;
  font-size: 12px;
  letter-spacing: -0.25px;
  color: #444;
  background: #f1f1f1;
}
svg { display: block; flex: none; }
i { font-style: normal; }
.svgt { font-family: "Open Sans", "Liberation Sans", sans-serif; font-weight: 600; letter-spacing: 0; }

/* title bar */
.titlebar {
  height: 33px;
  background: #217346;
  color: #fff;
  display: grid;
  grid-template-columns: 1fr auto 1fr;
  align-items: center;
}
.doc-title { transform: translateX(-2px); }
.winctl { justify-self: end; }

/* tabs */
.tabstrip {
  height: 24px;
  background: #217346;
  color: #fff;
  display: flex;
  align-items: stretch;
  line-height: 24px;
}
.tab { text-align: center; }
.tab-file { width: 58px; }
.tab-home { width: 68px; }
.tab-insert { width: 52px; }
.tab-layout { width: 100px; }
.tab-formulas { width: 72px; margin-right: 5px; }
.tab-data { width: 51px; background: #f1f1f1; color: #217346; }
.tab-review { width: 66px; }
.tab-view { width: 54px; }
.tellme { display: flex; align-items: center; gap: 4px; margin-left: 14px; color: #b5d3c1; }
.signin { margin-left: auto; margin-right: 11px; }
.share { width: 74px; background: #185c37; display: flex; align-items: center; gap: 2px; padding-left: 7px; }

/* ribbon */
.ribbon {
  height: 93px;
  padding-top: 3px;
  background: #f1f1f1;
  border-bottom: 1px solid #d2d2d2;
  display: flex;
  align-items: flex-start;
}
.group {
  position: relative;
  height: 85px;
  border-right: 1px solid #d0d0d0;
  display: flex;
  flex-direction: column;
}
.g1 { width: 252px; }
.g2 { width: 163px; }
.g3 { width: 149px; }
.g4 { width: 206px; }
.g5 { width: 329px; }
.g6 { width: 113px; }
.g7 { width: 121px; }
.group-body { height: 73px; display: flex; align-items: flex-start; }
.group-label { height: 12px; line-height: 16px; text-align: center; color: #666; font-size: 11.4px; }
.g7 .group-label { padding-right: 16px; }
.stack { display: flex; flex-direction: column; }
.item { height: 23px; display: flex; align-items: center; gap: 3px; white-space: nowrap; }
.item.tight { gap: 2px; }
.item.off { color: #a6a6a6; }
.large { display: flex; flex-direction: column; align-items: center; line-height: 16px; white-space: nowrap; }
.large-icon { height: 38px; display: flex; align-items: flex-start; justify-content: center; padding-top: 5px; }
.large-icon.up2 { padding-top: 3px; }
.caret {
  display: inline-block;
  width: 0;
  height: 0;
  margin-left: 4px;
  vertical-align: middle;
  border-left: 3px solid transparent;
  border-right: 3px solid transparent;
  border-top: 3px solid #666;
}
.caret.small { margin-left: 2px; }
.caret.wide { margin-left: 6px; }
.caret.dark { margin-left: 0; border-left-width: 4px; border-right-width: 4px; border-top-width: 4px; border-top-color: #777; }
.inner-sep { width: 1px; height: 58px; margin: 7px 5px 0 3px; background: #d8d8d8; }

.s-ext { width: 92px; margin-left: 8px; }
.w-other { width: 67px; }
.w-existing { width: 70px; }
.w-query { width: 46px; margin-left: 3px; }
.s-query { margin-left: 3px; }
.w-refresh { width: 46px; margin-left: 2px; }
.s-conn { margin-left: 3px; }
.sortcol { width: 17px; height: 73px; margin-left: 7px; padding-top: 7px; display: flex; flex-direction: column; gap: 8px; }
.w-sort { width: 34px; margin-left: 5px; }
.sep-filter { margin: 7px 4px 0 9px; }
.w-filter { width: 42px; height: 69px; background: #c6c6c6; }
.s-filter { margin-left: 3px; }
.w-ttc { width: 60px; }
.s-tools1 { width: 130px; }
.w-whatif { width: 60px; margin-left: 1px; }
.w-forecast { width: 44px; }
.s-outline { width: 89px; margin-left: 7px; }
.outline-side { display: flex; flex-direction: column; gap: 7px; padding-top: 4px; }
.launcher { position: absolute; right: 5px; bottom: 0; }
.collapse { margin: 77px 0 0 12px; }

/* formula row */
.formula-row {
  position: relative;
  height: 51px;
  padding: 10px 4px 10px 5px;
  background: #e6e6e6;
  display: flex;
  align-items: stretch;
}
.namebox {
  width: 102px;
  background: #fff;
  border: 1px solid #c6c6c6;
  padding: 0 6px 0 6px;
  display: flex;
  align-items: center;
  justify-content: space-between;
  font-family: "Liberation Serif", serif;
  font-size: 18.67px;
  letter-spacing: 0;
  color: #333;
}
.grip { align-self: center; margin: 0 13px 0 14px; }
.fxbox {
  width: 110px;
  margin-right: 3px;
  background: #fff;
  border: 1px solid #c6c6c6;
  display: flex;
  align-items: center;
  gap: 22px;
  padding-left: 10px;
}
.fx { font-family: "Liberation Serif", serif; font-size: 15px; color: #666; font-weight: bold; letter-spacing: 0; }
.fx small { font-size: 11px; }
.formula-input { flex: 1; background: #fff; border: 1px solid #c6c6c6; }
.formula-caret { position: absolute; right: 9px; top: 22px; }

/* sheet */
.workarea { height: 478px; background: #e6e6e6; display: flex; }
.sheet { width: 1345px; height: 478px; overflow: hidden; background: #fff; border-bottom: 1px solid #a0a0a0; }
.grid {
  width: 1345px;
  table-layout: fixed;
  border-collapse: separate;
  border-spacing: 0;
  font-family: "Liberation Serif", serif;
  font-size: 18.67px;
  letter-spacing: 0;
  color: #000;
}
.c-head { width: 37px; }
.c-col { width: 80px; }
.c-last { width: 28px; }
.grid th, .grid td {
  height: 25px;
  padding: 2px 0 0;
  line-height: 22px;
  font-weight: normal;
  border-right: 1px solid #d4d4d4;
  border-bottom: 1px solid #d4d4d4;
}
.grid th { background: #e6e6e6; text-align: center; border-right-color: #9f9f9f; border-bottom-color: #c6c6c6; }
.grid thead th { padding-top: 1px; line-height: 23px; border-right-color: #b4b4b4; border-bottom-color: #9f9f9f; }
.grid thead th:last-child { border-right-color: #e6e6e6; }
.grid td { position: relative; text-align: right; padding-right: 3px; }
.grid td:last-child { border-right: 2px solid #a0a0a0; }
.grid thead th.corner { padding: 0; }
.corner svg { margin: 4px 0 0 15px; }
.grid thead th.sel { background: #d2d2d2; color: #217346; border-bottom: 2px solid #217346; line-height: 22px; }
.grid th.sel-row { background: #d2d2d2; color: #217346; border-right: 2px solid #217346; }
.grid td.bad { background: #ffc7ce; color: #9c0006; }
.fbtn {
  position: absolute;
  right: 0;
  bottom: 1px;
  width: 17px;
  height: 16px;
  background: #f3f4f8;
  border: 1px solid #a6a6a6;
}
.fbtn::after {
  content: "";
  position: absolute;
  left: 4px;
  top: 5px;
  border-left: 4px solid transparent;
  border-right: 4px solid transparent;
  border-top: 4px solid #666;
}
.selection {
  position: absolute;
  left: -2px;
  top: -1px;
  width: 83px;
  height: 26px;
  border: 2px solid #217346;
  z-index: 2;
}
.selection::after {
  content: "";
  position: absolute;
  right: -3px;
  bottom: -4px;
  width: 6px;
  height: 6px;
  background: #217346;
  border: 1px solid #fff;
}

/* scrollbars */
.vscroll { width: 16px; height: 475px; margin: 2px 0 0 3px; display: flex; flex-direction: column; }
.sb-btn {
  width: 16px;
  height: 15px;
  flex: none;
  background: #fff;
  border: 1px solid #ababab;
  display: flex;
  align-items: center;
  justify-content: center;
}
.tri { width: 0; height: 0; display: block; border: 4px solid transparent; }
.tri.up { border-bottom: 5px solid #666; border-top: 0; }
.tri.down { border-top: 5px solid #666; border-bottom: 0; }
.tri.left { border-right: 5px solid #bbb; border-left: 0; }
.tri.right { border-left: 5px solid #bbb; border-right: 0; }
.tri.left.dark { border-right-color: #666; }
.tri.right.dark { border-left-color: #666; }
.v-thumb { height: 400px; flex: none; background: #fff; border: 1px solid #ababab; border-top-width: 2px; }
.v-track { flex: 1; background: #dcdcdc; }

/* sheet tabs */
.sheetbar {
  height: 28px;
  background: #e6e6e6;
  border-bottom: 1px solid #c6c6c6;
  display: flex;
  align-items: flex-start;
}
.sheet-nav { width: 100px; height: 24px; display: flex; align-items: center; gap: 23px; padding-left: 26px; }
.sheet-tab {
  width: 65px;
  height: 20px;
  margin-top: 3px;
  line-height: 19px;
  text-align: center;
  color: #444;
  border-left: 1px solid #a0a0a0;
}
.sheet-tab.current {
  width: 66px;
  height: 25px;
  margin-top: -1px;
  padding-top: 2px;
  line-height: 23px;
  background: #fff;
  color: #217346;
  font-weight: 700;
  border-left: 1px solid #ababab;
  border-right: 1px solid #ababab;
  border-bottom: 2px solid #217346;
}
.sheet-tab.current + .sheet-tab { border-left: 0; border-right: 1px solid #a0a0a0; width: 63px; }
.addsheet { margin: 4px 0 0 34px; }
.hgrip { margin: 7px 0 0 473px; }
.hscroll { display: flex; margin: 6px 0 0 16px; width: 509px; height: 15px; }
.hscroll .sb-btn { height: 15px; width: 15px; }
.h-thumb { width: 449px; background: #fff; border: 1px solid #ababab; border-left: 0; }
.h-track { flex: 1; background: #dcdcdc; }

/* status bar */
.statusbar { height: 21px; background: #f1f1f1; display: flex; align-items: center; line-height: 21px; }
.ready { width: 1074px; padding-left: 7px; }
.viewbtn { width: 38px; height: 21px; display: flex; align-items: center; justify-content: center; }
.viewbtn.on { background: #c6c6c6; }
.zoom { display: flex; align-items: center; width: 142px; padding-left: 4px; gap: 3px; }
.slider { position: relative; width: 100px; height: 1px; background: #9c9c9c; }
.knob { position: absolute; left: 48px; top: -5px; width: 4px; height: 11px; background: #666; }
.plus { margin-left: 1px; }
.pct { width: 36px; white-space: nowrap; }

/* taskbar */
.taskbar { height: 40px; background: #10141a; display: flex; color: #fff; }
.task { position: relative; flex: none; width: 49px; height: 40px; display: flex; align-items: center; justify-content: center; }
.task.t-first { width: 48px; }
.task:nth-child(3) { margin-left: 2px; }
.task.current { background: #3a3d41; }
.task.run::after { content: ""; position: absolute; left: 5px; right: 4px; bottom: 0; height: 2px; background: #76b9ed; }
.task.current::after { left: 0; right: 0; }
.app {
  width: 20px;
  height: 20px;
  border: 1px solid;
  display: flex;
  align-items: center;
  justify-content: center;
  font-weight: 700;
  font-size: 12px;
  letter-spacing: 0;
}
.ps { background: #0b1c3a; color: #8fc1ff; border-color: #6ea7e8; }
.au { background: #06302f; color: #40d9b0; border-color: #2bb590; }
.tray { flex: 1; display: flex; align-items: center; padding-left: 516px; min-width: 0; }
.people { margin-right: 18px; }
.chevron { margin-right: 9px; }
.battery { margin-right: 7px; }
.action { margin-right: 9px; }
.wifi { margin-right: 8px; }
.volume { margin-right: 9px; }
.lang { width: 24px; white-space: nowrap; font-size: 12px; letter-spacing: 0; }
.clock { flex: none; width: 70px; display: flex; flex-direction: column; align-items: center; line-height: 19px; letter-spacing: 0; margin: 0 13px 0 5px; white-space: nowrap; }
.notify { position: relative; flex: none; }
.badge {
  position: absolute;
  left: 7px;
  top: 7px;
  width: 16px;
  height: 16px;
  border-radius: 50%;
  background: #444;
  border: 1px solid #222;
  text-align: center;
  line-height: 14px;
  font-weight: 700;
  font-size: 11px;
  letter-spacing: 0;
}
```
